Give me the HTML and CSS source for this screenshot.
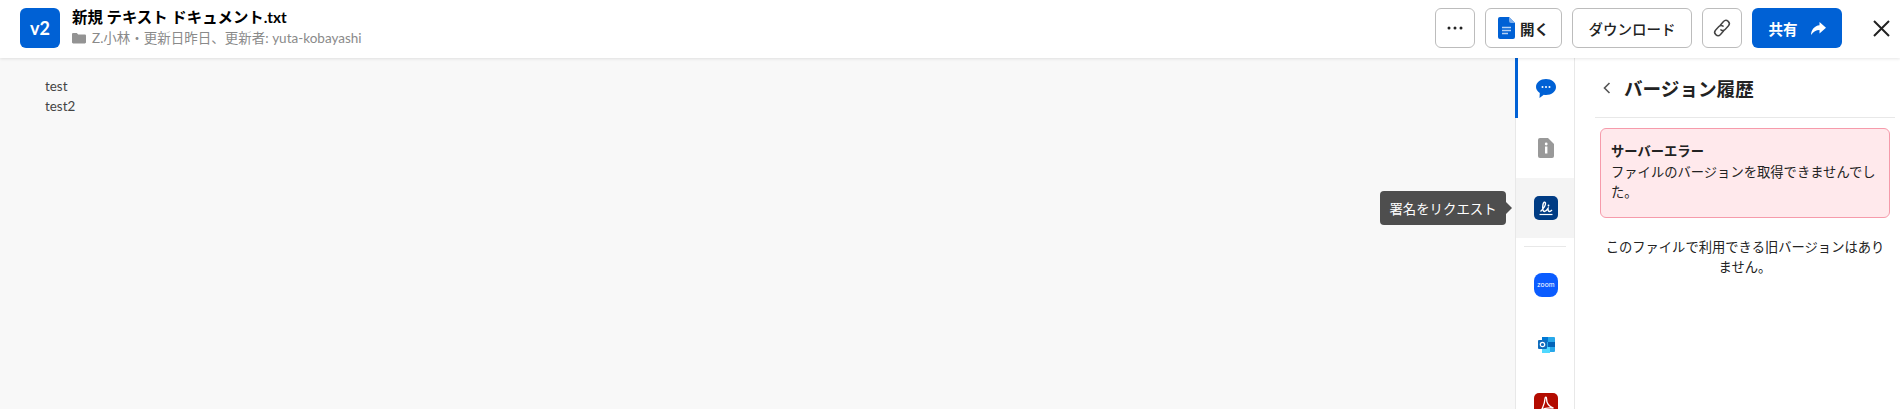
FILE: index.html
```html
<!DOCTYPE html>
<html lang="ja">

<head>
    <meta charset="utf-8">
    <link rel="stylesheet" href="styles.css">
</head>

<body>

    <header class="top-bar">
        <div class="file-badge">v2</div>
        <div class="file-info">
            <div class="file-name">新規 テキスト ドキュメント.txt</div>
            <div class="file-meta">
                <svg class="folder-icon" width="14" height="12" viewBox="0 0 14 12">
                    <path d="M1.2 1h3.6l1.4 1.500h6.600c.6 0 1.200.5 1.200 1.100v6.700c0 .6-.6 1.200-1.200 1.200H1.200C.6 11.500 0 10.900 0 10.300V2.200C0 1.500.6 1 1.200 1z" fill="#939393"/>
                </svg>
                <span>Z.小林・更新日昨日、更新者: yuta-kobayashi</span>
            </div>
        </div>
        <div class="actions">
            <button class="btn btn-icon">
                <svg width="16" height="4" viewBox="0 0 16 4">
                    <circle cx="2" cy="2" r="1.500" fill="#222"/>
                    <circle cx="8" cy="2" r="1.500" fill="#222"/>
                    <circle cx="14" cy="2" r="1.500" fill="#222"/>
                </svg>
            </button>
            <button class="btn btn-open">
                <svg width="17" height="22" viewBox="0 0 17 22">
                    <path d="M2 0h9l6 6v14a2 2 0 0 1-2 2H2a2 2 0 0 1-2-2V2a2 2 0 0 1 2-2z" fill="#0061d5"/>
                    <path d="M11 0l6 6h-4a2 2 0 0 1-2-2z" fill="#7fb0ec"/>
                    <path d="M4 10.500h9M4 13.500h9M4 16.500h6" stroke="#b5d2f5" stroke-width="1.300"/>
                </svg>
                <span>開く</span>
            </button>
            <button class="btn btn-download">ダウンロード</button>
            <button class="btn btn-icon">
                <svg width="20" height="20" viewBox="0 0 20 20" fill="none" stroke="#444" stroke-width="1.500" stroke-linecap="round">
                    <path d="M8.500 7l3-3.500a3.300 3.300 0 0 1 4.800 4.600l-3.200 3.300a3.300 3.300 0 0 1-4.200.4"/>
                    <path d="M11.500 13l-3 3.500a3.300 3.300 0 0 1-4.800-4.600l3.200-3.300a3.300 3.300 0 0 1 4.200-.4"/>
                </svg>
            </button>
            <button class="btn btn-share">
                <span>共有</span>
                <svg width="15" height="13" viewBox="0 0 15 13">
                    <path d="M8.500 0L15 5.700 8.500 11.500V8C5 8 2.500 9.500 0 13 .3 7.500 3.500 3.800 8.500 3.200z" fill="#fff"/>
                </svg>
            </button>
        </div>
        <button class="close-btn">
            <svg width="17" height="17" viewBox="0 0 17 17">
                <path d="M1 1l15 15M16 1L1 16" stroke="#222" stroke-width="2"/>
            </svg>
        </button>
    </header>

    <main class="content">
        <section class="preview">
            <p>test</p>
            <p>test2</p>
        </section>

        <nav class="side-nav">
            <div class="nav-item active">
                <svg width="20" height="19" viewBox="0 0 20 19">
                    <path d="M10 0c5.500 0 10 3.500 10 8s-4.500 8-10 8c-.8 0-1.500-.1-2.200-.2L3.500 19l.3-5C1.500 12.500 0 10.400 0 8c0-4.500 4.500-8 10-8z" fill="#0061d5"/>
                    <circle cx="6.500" cy="8" r="1" fill="#fff"/>
                    <circle cx="10" cy="8" r="1" fill="#fff"/>
                    <circle cx="13.500" cy="8" r="1" fill="#fff"/>
                </svg>
            </div>
            <div class="nav-item">
                <svg width="16" height="20" viewBox="0 0 16 20">
                    <path d="M2 0h8l6 6v12a2 2 0 0 1-2 2H2a2 2 0 0 1-2-2V2a2 2 0 0 1 2-2z" fill="#999"/>
                    <rect x="7" y="8.500" width="2.400" height="7" fill="#fff"/>
                    <circle cx="8.200" cy="6" r="1.400" fill="#fff"/>
                </svg>
            </div>
            <div class="nav-item hovered">
                <svg width="24" height="24" viewBox="0 0 24 24">
                    <rect width="24" height="24" rx="5" fill="#003c84"/>
                    <path d="M6.500 15.500C9 13 12 9.500 11.500 7 11 5.500 9.500 6 9 8.500 8.500 11 8.500 15.500 10.500 15.500 12 15.500 13 14 14 12.500 14 14.500 14 15.500 15.500 15.500 16.500 15.500 17 15 18 14" fill="none" stroke="#fff" stroke-width="1.400"/>
                    <circle cx="14.500" cy="9.500" r=".9" fill="#fff"/>
                    <path d="M5.500 18.500h13" stroke="#fff" stroke-width="1.200"/>
                </svg>
                <div class="tooltip">署名をリクエスト</div>
            </div>
            <div class="nav-divider"></div>
            <div class="nav-item">
                <svg width="24" height="24" viewBox="0 0 24 24">
                    <rect width="24" height="24" rx="8" fill="#0b5cff"/>
                    <text x="12" y="14" class="zoom-text" text-anchor="middle">zoom</text>
                </svg>
            </div>
            <div class="nav-item">
                <svg width="17" height="16" viewBox="0 0 17 16">
                    <rect x="4" y="0" width="13" height="15" rx="1" fill="#28a8ea"/>
                    <rect x="4" y="0" width="6" height="5" fill="#0078d4"/>
                    <rect x="10" y="5" width="7" height="5" fill="#0364b8"/>
                    <rect x="4" y="10" width="8" height="6" fill="#50d9ff"/>
                    <rect x="0" y="3" width="9" height="9" rx="1" fill="#0f6cbd"/>
                    <circle cx="4.500" cy="7.500" r="2.200" fill="none" stroke="#fff" stroke-width="1.200"/>
                </svg>
            </div>
            <div class="nav-item">
                <svg width="24" height="24" viewBox="0 0 24 24">
                    <rect width="24" height="24" rx="5" fill="#b30b00"/>
                    <path d="M4.500 19.500c3-1.500 6-7 6.500-14 .2-1.800 1.500-1.500 1.500 0 0 4 2.500 8 7 9.500-4.500-.5-10 .5-12.500 2" fill="none" stroke="#fff" stroke-width="1.300"/>
                </svg>
            </div>
        </nav>

        <aside class="version-panel">
            <div class="panel-head">
                <svg width="8" height="12" viewBox="0 0 8 12">
                    <path d="M6.500 1L1.500 6l5 5" fill="none" stroke="#555" stroke-width="1.600"/>
                </svg>
                <h2>バージョン履歴</h2>
            </div>
            <div class="error-box">
                <strong>サーバーエラー</strong>
                <div>ファイルのバージョンを取得できませんでした。</div>
            </div>
            <p class="empty-note">このファイルで利用できる旧バージョンはありません。</p>
        </aside>
    </main>

</body>

</html>
```

FILE: styles.css
```css
* {
    box-sizing: border-box;
}

html,
body {
    height: 100%;
}

body {
    margin: 0;
    height: 409px;
    overflow: hidden;
    display: flex;
    flex-direction: column;
    background-color: #fff;
    color: #222;
    font-family: Lato, "Noto Sans CJK JP", sans-serif;
    font-size: 13px;
}

.top-bar {
    position: relative;
    z-index: 2;
    flex: 0 0 58px;
    display: flex;
    align-items: center;
    padding: 0 0 2px 20px;
    background: #fff;
    box-shadow: 0 1px 3px rgba(0, 0, 0, 0.1);
}

.file-badge {
    width: 40px;
    height: 40px;
    display: flex;
    align-items: center;
    justify-content: center;
    margin-right: 12px;
    border-radius: 6px;
    background-color: #0061d5;
    color: #fff;
    font-size: 18px;
    font-weight: 700;
}

.file-info {
    flex: 1;
    padding-bottom: 3px;
}

.file-name {
    margin-bottom: 2px;
    font-size: 15.4px;
    font-weight: 700;
    line-height: 20px;
    color: #000;
}

.file-meta {
    display: flex;
    align-items: center;
    gap: 6px;
    font-size: 13.5px;
    line-height: 18px;
    color: #8a8a8a;
}

.actions {
    display: flex;
    gap: 10px;
}

.btn {
    height: 40px;
    display: flex;
    align-items: center;
    justify-content: center;
    padding: 0;
    border: 1px solid #bcbcbc;
    border-radius: 6px;
    background: #fff;
    color: #222;
    font-family: inherit;
    font-size: 14.5px;
    font-weight: 500;
}

.btn-icon {
    width: 40px;
}

.btn-open {
    width: 77px;
    gap: 5px;
    font-weight: 700;
}

.btn-download {
    width: 120px;
}

.btn-share {
    width: 90px;
    gap: 13px;
    border: none;
    background-color: #0061d5;
    color: #fff;
    font-weight: 700;
}

.close-btn {
    width: 58px;
    height: 40px;
    display: flex;
    align-items: center;
    justify-content: flex-end;
    padding: 0 10px 0 0;
    border: none;
    background: none;
}

.content {
    flex: 1;
    min-height: 0;
    display: flex;
    overflow: hidden;
}

.preview {
    flex: 1;
    padding: 18px 45px;
    background-color: #f8f8f8;
    color: #444;
    font-size: 13.4px;
    line-height: 20px;
}

.preview p {
    margin: 0;
}

.side-nav {
    flex: 0 0 60px;
    border-left: 1px solid #e8e8e8;
    border-right: 1px solid #e8e8e8;
    background: #fff;
}

.nav-item {
    position: relative;
    height: 60px;
    display: flex;
    align-items: center;
    justify-content: center;
    padding-left: 2px;
}

.nav-item.active::before {
    content: "";
    position: absolute;
    left: -1px;
    top: 0;
    bottom: 0;
    width: 3px;
    background-color: #0061d5;
}

.nav-item.hovered {
    background-color: #f4f4f4;
}

.nav-divider {
    height: 1px;
    margin: 8px 8px;
    background-color: #e8e8e8;
}

.zoom-text {
    fill: #fff;
    font-family: Lato, sans-serif;
    font-size: 7px;
    letter-spacing: 0.2px;
}

.tooltip {
    position: absolute;
    right: 68px;
    top: 13px;
    width: 126px;
    height: 34px;
    display: flex;
    align-items: center;
    justify-content: center;
    border-radius: 4px;
    background-color: #4e4e4e;
    color: #fff;
    font-size: 13.4px;
    white-space: nowrap;
}

.tooltip::after {
    content: "";
    position: absolute;
    right: -6px;
    top: 11px;
    border-top: 6px solid transparent;
    border-bottom: 6px solid transparent;
    border-left: 6px solid #4e4e4e;
}

.version-panel {
    flex: 0 0 325px;
    padding: 0 5px 0 20px;
    background: #fff;
}

.panel-head {
    height: 60px;
    display: flex;
    align-items: center;
    gap: 13px;
    padding-left: 8px;
    border-bottom: 1px solid #e8e8e8;
}

.panel-head h2 {
    margin: 0;
    font-size: 18.6px;
    font-weight: 700;
    color: #222;
}

.error-box {
    width: 290px;
    height: 90px;
    margin: 10px 0 0 5px;
    padding: 12px 10px 0;
    border: 1px solid #f69bab;
    border-radius: 6px;
    background-color: #ffe9ec;
    font-size: 13.3px;
    line-height: 20.5px;
}

.error-box strong {
    display: block;
}

.empty-note {
    width: 290px;
    margin: 19px 0 0 5px;
    padding: 0 5px;
    font-size: 13.3px;
    line-height: 20px;
    text-align: center;
    color: #222;
}
```
